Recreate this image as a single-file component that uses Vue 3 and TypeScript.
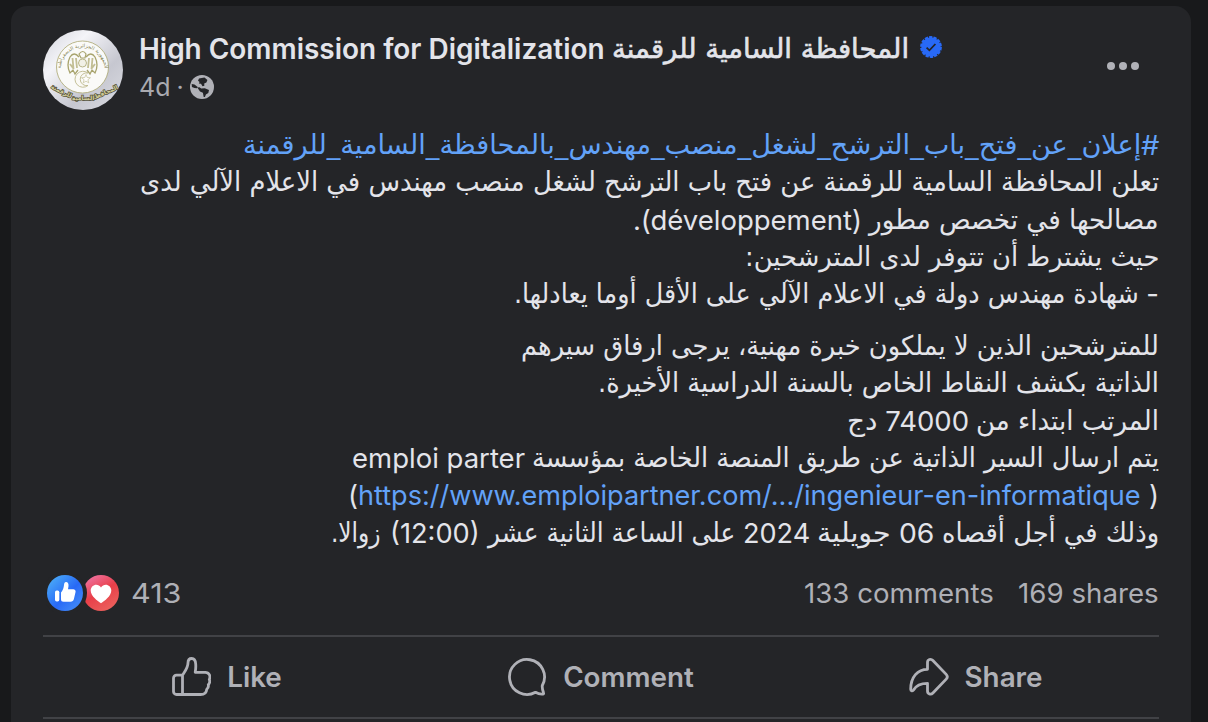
<script setup lang="ts">
import { nextTick, onMounted, ref } from 'vue'

type Kind = 'ar' | 'la' | 'link' | 'arlink'
interface Run { t: string; w: number; k: Kind; g?: number }

const title: Run[] = [
  { t: 'High Commission for Digitalization', w: 466, k: 'la' },
  { t: 'المحافظة السامية للرقمنة', w: 297, k: 'ar', g: 7 },
]
const paragraphs: Run[][][] = [
  [
    [
      { t: '#', w: 18, k: 'link' },
      { t: 'إعلان_عن_فتح_باب_الترشح_لشغل_منصب_مهندس_بالمحافظة_السامية_للرقمنة', w: 898, k: 'arlink' },
    ],
    [{ t: 'تعلن المحافظة السامية للرقمنة عن فتح باب الترشح لشغل منصب مهندس في الاعلام الآلي لدى', w: 1019, k: 'ar' }],
    [
      { t: 'مصالحها في تخصص مطور', w: 290, k: 'ar' },
      { t: '(développement)', w: 221, k: 'la', g: 7 },
      { t: '.', w: 8, k: 'la' },
    ],
    [{ t: 'حيث يشترط أن تتوفر لدى المترشحين:', w: 414, k: 'ar' }],
    [
      { t: '-', w: 13, k: 'la' },
      { t: 'شهادة مهندس دولة في الاعلام الآلي على الأقل أوما يعادلها.', w: 625, k: 'ar', g: 7 },
    ],
  ],
  [
    [{ t: 'للمترشحين الذين لا يملكون خبرة مهنية، يرجى ارفاق سيرهم', w: 638, k: 'ar' }],
    [{ t: 'الذاتية بكشف النقاط الخاص بالسنة الدراسية الأخيرة.', w: 561, k: 'ar' }],
    [
      { t: 'المرتب ابتداء من', w: 183, k: 'ar' },
      { t: '74000', w: 84, k: 'la', g: 7 },
      { t: 'دج', w: 30, k: 'ar', g: 8 },
    ],
    [
      { t: 'يتم ارسال السير الذاتية عن طريق المنصة الخاصة بمؤسسة', w: 627, k: 'ar' },
      { t: 'emploi parter', w: 173, k: 'la', g: 7 },
    ],
    [
      { t: ')', w: 10, k: 'la' },
      { t: 'https://www.emploipartner.com/.../ingenieur-en-informatique', w: 783, k: 'link', g: 8 },
      { t: '(', w: 10, k: 'la' },
    ],
    [
      { t: 'وذلك في أجل أقصاه', w: 217, k: 'ar' },
      { t: '06', w: 35, k: 'la', g: 8 },
      { t: 'جويلية', w: 74, k: 'ar', g: 8 },
      { t: '2024', w: 67, k: 'la', g: 7 },
      { t: 'على الساعة الثانية عشر', w: 247, k: 'ar', g: 8 },
      { t: '(12:00)', w: 90, k: 'la', g: 8 },
      { t: 'زوالا.', w: 50, k: 'ar', g: 9 },
    ],
  ],
]

const root = ref<HTMLElement | null>(null)

// Condense or widen each run so that it fills its measure.
function fitRuns() {
  root.value?.querySelectorAll<HTMLElement>('.run').forEach((box) => {
    const inner = box.firstElementChild as HTMLElement
    inner.style.transform = `scaleX(${box.clientWidth / inner.offsetWidth})`
  })
}
onMounted(async () => {
  await nextTick()
  fitRuns()
  document.fonts.ready.then(fitRuns)
})
</script>

<template>
  <div ref="root" class="page">
    <article class="card">
      <header class="head">
        <svg class="avatar" viewBox="0 0 80 80">
          <defs>
            <linearGradient id="silver" x1="0" y1="0" x2="1" y2="1">
              <stop offset="0" stop-color="#d3d4dc" /><stop offset=".3" stop-color="#f4f4f8" />
              <stop offset=".65" stop-color="#c6c7d0" /><stop offset="1" stop-color="#dcdde3" />
            </linearGradient>
            <path id="arcTop" d="M21.500 52A22 22 0 1 1 57.500 52" />
          </defs>
          <circle cx="40" cy="40" r="40" fill="url(#silver)" />
          <circle cx="39.500" cy="37" r="26" fill="#fafaf8" stroke="#a9a66f" stroke-width=".8" />
          <text class="seal" text-anchor="middle"><textPath href="#arcTop" startOffset="50%">الجمهورية الجزائرية الديمقراطية</textPath></text>
          <g fill="none" stroke="#a8a46e" stroke-width="1.300">
            <path d="M36 27q-5-6-9 0q-4 8 0 16l3-3 2 4 3-4M43 27q5-6 9 0q4 8 0 16l-3-3-2 4-3-4" />
            <path d="M29.500 28l1 11M33 28l1 10M49.500 28l-1 11M46 28l-1 10M27 34l3 4M52 34l-3 4" stroke-width="1.800" stroke="#c2be94" />
            <path d="M36 24q4-5 7 0l-1 4h-4z" stroke-width="1.200" />
            <circle cx="39.500" cy="33" r="4" fill="#f1f0e6" stroke-width=".8" />
          </g>
          <path d="M45 43a8 8 0 1 0 0 12.500a6.400 6.400 0 1 1 0-12.500z" fill="#faf9f4" stroke="#bdb98d" stroke-width=".9" />
          <path d="M43 44.500l1.200 3 3.300.2-2.600 2 .9 3.200-2.800-1.800-2.800 1.800.9-3.200-2.600-2 3.300-.2z" fill="#fff" stroke="#c6c29b" stroke-width=".7" />
          <g class="motto" text-anchor="middle">
            <text transform="translate(62.500 64.500) rotate(-24)">المحافظة</text>
            <text transform="translate(40 70)">السامية</text>
            <text transform="translate(17.500 63) rotate(27)">للرقمنة</text>
          </g>
        </svg>
        <div class="who">
          <div class="title">
            <span v-for="r in title" :key="r.t" class="run" :class="r.k" :style="{ width: r.w + 'px', marginInlineStart: (r.g ?? 0) + 'px' }"><bdi :dir="r.k === 'ar' ? 'rtl' : 'ltr'">{{ r.t }}</bdi></span>
            <svg class="badge" viewBox="0 0 22 22">
              <circle cx="11" cy="11" r="9.700" fill="#2869f6" stroke="#2869f6" stroke-width="2.400" stroke-dasharray="3.300 1.050" />
              <path d="M6.600 11.600l2.800 2.700 6-6.300" fill="none" stroke="#242528" stroke-width="1.800" />
            </svg>
          </div>
          <div class="meta">
            <span class="age">4d</span><span class="dot">·</span>
            <svg class="globe" viewBox="0 0 24 24">
              <circle cx="12" cy="12" r="12" fill="#b0b1b7" />
              <path d="M14.500 2.500L9 3.500 8 5.800l1.600 1.200-.8 1.600 2.200.2 1.500 2.400 1.900-.4-.2-2.200 2.200-1 1-2.600zM7.300 12.500l2.200-.3 1.700 1.300 3.600-.2 4.200 1.600-.7 3-2.400 1.700-1 2.400h-1.200l-.8-4.200-2.900-1.300zM1.700 9l2.800.4 3.200 2.700-.8 1.200-2.400-.3-2.600-1z" fill="#242528" />
            </svg>
          </div>
        </div>
        <svg class="more" viewBox="0 0 32 8" fill="#b0b1b7"><circle cx="4" cy="4" r="4" /><circle cx="16" cy="4" r="4" /><circle cx="28" cy="4" r="4" /></svg>
      </header>

      <section class="body" dir="rtl">
        <div v-for="(p, i) in paragraphs" :key="i" class="para">
          <div v-for="(line, j) in p" :key="j" class="line">
            <span v-for="(r, n) in line" :key="n" class="run" :class="r.k" :style="{ width: r.w + 'px', marginInlineStart: (r.g ?? 0) + 'px' }"><bdi :dir="r.k.startsWith('ar') ? 'rtl' : 'ltr'">{{ r.t }}</bdi></span>
          </div>
        </div>
      </section>

      <div class="stats">
        <svg class="reactions" viewBox="0 0 74 38">
          <defs>
            <linearGradient id="blue" x1="0.100" y1="0.100" x2=".8" y2=".8"><stop offset="0" stop-color="#49a9f8" /><stop offset=".65" stop-color="#2869f6" /><stop offset="1" stop-color="#3c82f7" /></linearGradient>
            <linearGradient id="red" x1=".15" y1="0" x2=".75" y2="1"><stop offset="0" stop-color="#f076a8" /><stop offset=".5" stop-color="#e83f49" /><stop offset="1" stop-color="#ec625d" /></linearGradient>
          </defs>
          <circle cx="55" cy="19" r="18" fill="url(#red)" />
          <circle cx="19" cy="19" r="22" fill="#242528" />
          <circle cx="19" cy="19" r="18" fill="url(#blue)" />
          <rect x="9" y="16.500" width="4.300" height="11" rx="1.700" fill="#fff" />
          <path d="M15 18.500c2-2.500 2.700-4.500 3-7.500.1-1.700.8-2.900 2-2.900 2 0 2.700 1.700 2.500 3.900l-.5 3.300h5.200c1.700 0 2.900 1.400 2.300 3l-1.600 6.700c-.5 1.900-1.500 2.700-3.400 2.700H17.500c-1.700 0-2.500-.8-2.500-2.500z" fill="#fff" />
          <path d="M55 29.200c-3.500-2.200-10.300-6.900-10.300-12.600 0-5.900 7.300-8.100 10.300-3 3-5.100 10.300-2.900 10.300 3 0 5.700-6.800 10.400-10.300 12.600z" fill="#fff" />
        </svg>
        <span class="run la" :style="{ width: '50px' }"><bdi>413</bdi></span>
        <span class="grow"></span>
        <span class="run la comments" :style="{ width: '190px' }"><bdi>133 comments</bdi></span>
        <span class="run la" :style="{ width: '141px' }"><bdi>169 shares</bdi></span>
      </div>

      <footer class="actions">
        <button class="act like">
          <svg width="40" height="40" viewBox="0 0 40 40"><path d="M11.500 18.200H5.500a3 3 0 0 0-3 3v13.300a3 3 0 0 0 3 3h24c4 0 6-2 6.200-5.200 1.300-1 2-2.800 1.600-4.600 1.400-1.500 1.800-3.400 1-5.200 1.600-3.500-.2-7.200-4-7.200H24.200c.6-3 .7-5.500.5-8.300-.2-3-1.500-5.500-4-5.500-2.600 0-3.700 1.500-3.700 4.300 0 5-2.700 8-5.500 12.400zv19.300" /></svg>
          <span>Like</span>
        </button>
        <button class="act comment">
          <svg width="40" height="40" viewBox="0 0 40 40"><path d="M35.300 28.500A17.500 17.500 0 1 0 28.500 35.300c2.500 1.400 5 2 7.500 1.700.5 0 .8-.5.600-1-.9-2.600-1.700-5.200-1.300-7.500z" /></svg>
          <span>Comment</span>
        </button>
        <button class="act share">
          <svg width="40" height="40" viewBox="0 0 40 40"><path d="M18.500 12.300V5.500c0-3 3.300-4.200 5.400-2l13.300 13.900c1.400 1.500 1.400 3.200 0 4.700L23.900 36c-2.100 2.200-5.400 1-5.400-2v-7.700C10 26.300 6.500 29.500 4.500 33c-.8 1.300-2.800 1-2.800-.8 0-12.400 7-19.900 16.800-19.900z" /></svg>
          <span>Share</span>
        </button>
      </footer>
    </article>
  </div>
</template>

<style>
html, body { background: #18191b; }
body { overflow: hidden; }
</style>

<style scoped>
.page { width: 1208px; height: 722px; box-sizing: border-box; padding: 6px 17px 0 11px; overflow: hidden; background: #18191b; font-family: Inter, "DejaVu Sans", sans-serif; color: #e3e4ea; }
.card { box-sizing: border-box; height: 740px; padding: 24px 32px 0; border-radius: 16px; background: #242528; }
.head { display: flex; height: 80px; }
.avatar { width: 80px; height: 80px; flex: none; margin-right: 16px; }
.seal { font: 5px "DejaVu Sans", sans-serif; fill: #817d4d; }
.motto { font: bold 6px "DejaVu Sans", sans-serif; fill: #d5d09b; stroke: #55533c; stroke-width: 1.400px; paint-order: stroke; }
.who { flex: 1; }
.title { display: flex; height: 40px; line-height: 39px; font-size: 28px; font-weight: 600; }
.run { display: block; flex: none; white-space: nowrap; }
.run bdi { display: inline-block; transform-origin: 0 50%; }
.body .run bdi { transform-origin: 100% 50%; }
.title .run.ar bdi { transform-origin: 0 50%; font-weight: 400; -webkit-text-stroke: .6px; }
.ar, .arlink { font-family: "DejaVu Sans", sans-serif; font-size: 27px; }
.title .run.ar { line-height: 37px; }
.link, .arlink { color: #62a2f8; }
.badge { width: 22px; height: 22px; margin: 6px 0 0 11px; }
.meta { display: flex; align-items: center; height: 34px; font-size: 25px; color: #a9aab0; }
.dot { margin: 0 6px; }
.globe { width: 24px; height: 24px; }
.more { width: 32px; height: 8px; margin: 32px 20px 0 0; }
.body { padding-top: 16px; }
.para + .para { margin-top: 14.400px; }
.line { display: flex; height: 37.333px; line-height: 37.333px; font-size: 27.500px; }
.line .la, .line .link { line-height: 38.600px; }
.stats { display: flex; align-items: center; height: 40px; margin-top: 22px; color: #afb0b6; font-size: 27.500px; }
.reactions { width: 74px; height: 38px; margin: 0 11px 0 3px; }
.grow { flex: 1; }
.comments { margin-right: 24px; }
.actions { display: grid; grid-template-columns: repeat(3, 1fr); height: 80px; margin-top: 22px; border-top: 2px solid #414246; border-bottom: 2px solid #414246; }
.act { display: flex; align-items: center; justify-content: center; gap: 16px; padding: 0; border: 0; background: none; color: #b0b1b7; font: 600 27.800px Inter, sans-serif; }
.act svg { flex: none; fill: none; stroke: currentColor; stroke-width: 2.800; stroke-linejoin: round; }
.like { padding-right: 5px; }
.comment { padding-right: 1px; }
.share { padding-left: 5px; }
</style>
